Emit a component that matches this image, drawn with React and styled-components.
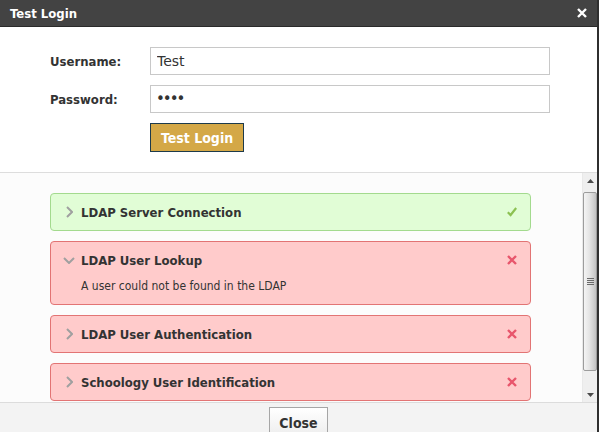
import React from 'react';
import styled, { createGlobalStyle } from 'styled-components';

const GlobalStyle = createGlobalStyle`
  html, body {
    margin: 0;
    padding: 0;
    background: #ffffff;
  }
  body {
    font-family: "DejaVu Sans Condensed", "DejaVu Sans", sans-serif;
    color: #333333;
  }
`;

const Dialog = styled.div`
  width: 599px;
  height: 432px;
  box-sizing: border-box;
  border-right: 2px solid #2f2f2f;
  display: flex;
  flex-direction: column;
  overflow: hidden;
  background: #ffffff;
`;

const TitleBar = styled.div`
  height: 26px;
  flex: none;
  background: #434343;
  border-bottom: 1px solid #2a2a2a;
  display: flex;
  align-items: center;
  justify-content: space-between;
  padding: 0 10px 0 10px;
  color: #ffffff;
`;

const TitleText = styled.span`
  font-size: 13px;
  font-weight: bold;
`;

const CloseX = styled.button`
  border: none;
  background: none;
  padding: 0;
  width: 10px;
  height: 10px;
  display: flex;
  cursor: pointer;
`;

const FormSection = styled.div`
  flex: none;
  padding: 20px 0 20px 50px;
  border-bottom: 1px solid #dddddd;
  display: grid;
  grid-template-columns: 100px 400px;
  row-gap: 10px;
  align-items: center;
`;

const Label = styled.label`
  font-size: 13px;
  font-weight: bold;
  color: #333333;
`;

const TextInput = styled.input`
  box-sizing: border-box;
  height: 28px;
  width: 400px;
  border: 1px solid #c8c8c8;
  padding: 0 6px;
  font-family: "DejaVu Sans", sans-serif;
  font-size: 14px;
  color: #333333;
  outline: none;
  background: #ffffff;

  &[type='password'] {
    font-size: 15px;
    letter-spacing: -2px;
    padding-left: 5px;
  }
`;

const PrimaryButton = styled.button`
  grid-column: 2;
  justify-self: start;
  box-sizing: border-box;
  height: 29px;
  padding: 0 10px;
  background: #d4a847;
  border: 1px solid #1d3a4b;
  color: #ffffff;
  font-family: inherit;
  font-size: 14px;
  font-weight: bold;
  cursor: pointer;
`;

const Results = styled.div`
  flex: 1;
  min-height: 0;
  display: flex;
  background: #fcfcfc;
`;

const List = styled.div`
  flex: 1;
  min-width: 0;
  overflow: hidden;
  padding: 20px 51px 0 50px;
  display: flex;
  flex-direction: column;
  gap: 10px;
`;

const ScrollBar = styled.div`
  flex: none;
  width: 15px;
  display: flex;
  flex-direction: column;
  background: #efefef;
  border-left: 1px solid #e9e9e9;
  box-sizing: border-box;
`;

const ArrowButton = styled.div`
  flex: none;
  height: 15px;
  display: flex;
  align-items: center;
  justify-content: center;
`;

const Track = styled.div`
  flex: 1;
  display: flex;
  flex-direction: column;
  padding: 4px 0 16px 0;
`;

const Thumb = styled.div`
  flex: 1;
  box-sizing: border-box;
  border: 1px solid #9c9c9c;
  border-radius: 2px;
  background: linear-gradient(to right, #f4f4f4, #e4e4e4 45%, #d0d0d0 80%, #c2c2c2);
  display: flex;
  align-items: center;
  justify-content: center;
`;

const Card = styled.div`
  flex: none;
  border: 1px solid ${p => (p.ok ? '#a3da8e' : '#e27474')};
  background: ${p => (p.ok ? '#e1fdd6' : '#ffcbcb')};
  border-radius: 4px;
  padding: 11px 13px 11px 12px;
`;

const CardHead = styled.div`
  display: flex;
  align-items: center;
  height: 14px;
`;

const Chevron = styled.span`
  width: 12px;
  display: flex;
  justify-content: center;
  margin-right: 6px;
`;

const CardTitle = styled.span`
  flex: 1;
  font-size: 13px;
  font-weight: bold;
  color: #333333;
`;

const StatusIcon = styled.span`
  display: flex;
  width: 10px;
  height: 10px;
`;

const Detail = styled.div`
  margin: 12px 0 0 18px;
  font-size: 12px;
  line-height: 14px;
  color: #333333;
`;

const Footer = styled.div`
  flex: none;
  height: 30px;
  box-sizing: border-box;
  overflow: hidden;
  background: #f3f3f3;
  border-top: 1px solid #dcdcdc;
  display: flex;
  justify-content: center;
  align-items: flex-start;
  padding-top: 4px;
`;

const GhostButton = styled.button`
  flex: none;
  box-sizing: border-box;
  height: 32px;
  padding: 0 9px;
  border: 1px solid #a6a6a6;
  background: linear-gradient(#ffffff, #ececec);
  font-family: inherit;
  font-size: 14px;
  font-weight: bold;
  color: #333333;
  cursor: pointer;
`;

const ChevronIcon = ({ open }) => (
  <svg width={open ? 12 : 7} height={open ? 7 : 12} viewBox={open ? '0 0 12 7' : '0 0 7 12'}>
    {open ? (
      <path d="M1 1 L6 6 L11 1" fill="none" stroke="#a0a0a0" strokeWidth="2" />
    ) : (
      <path d="M1 1 L6 6 L1 11" fill="none" stroke="#a0a0a0" strokeWidth="2" />
    )}
  </svg>
);

const CheckIcon = () => (
  <svg width="10" height="10" viewBox="0 0 10 10">
    <path d="M0.8 5.2 L3.6 8 L9.2 1" fill="none" stroke="#8cc152" strokeWidth="2.2" />
  </svg>
);

const CrossIcon = ({ color = '#e8566c' }) => (
  <svg width="10" height="10" viewBox="0 0 10 10">
    <path d="M1 1 L9 9 M9 1 L1 9" fill="none" stroke={color} strokeWidth="2.4" />
  </svg>
);

const Triangle = ({ up }) => (
  <svg width="7" height="4" viewBox="0 0 7 4">
    <path d={up ? 'M0 4 L3.5 0 L7 4 Z' : 'M0 0 L7 0 L3.5 4 Z'} fill="#4a4a4a" />
  </svg>
);

const Grip = () => (
  <svg width="7" height="7" viewBox="0 0 7 7">
    <path d="M0 0.5 H7 M0 2.5 H7 M0 4.5 H7 M0 6.5 H7" stroke="#6a6a6a" strokeWidth="1" />
  </svg>
);

const checks = [
  { name: 'LDAP Server Connection', ok: true },
  { name: 'LDAP User Lookup', ok: false, open: true, detail: 'A user could not be found in the LDAP' },
  { name: 'LDAP User Authentication', ok: false },
  { name: 'Schoology User Identification', ok: false },
];

const App = () => {
  return (
    <>
      <GlobalStyle />
      <Dialog>
        <TitleBar>
          <TitleText>Test Login</TitleText>
          <CloseX aria-label="Close">
            <CrossIcon color="#ffffff" />
          </CloseX>
        </TitleBar>

        <FormSection>
          <Label htmlFor="username">Username:</Label>
          <TextInput id="username" defaultValue="Test" />
          <Label htmlFor="password">Password:</Label>
          <TextInput id="password" type="password" defaultValue="test" />
          <PrimaryButton>Test Login</PrimaryButton>
        </FormSection>

        <Results>
          <List>
            {checks.map(c => (
              <Card key={c.name} ok={c.ok}>
                <CardHead>
                  <Chevron><ChevronIcon open={c.open} /></Chevron>
                  <CardTitle>{c.name}</CardTitle>
                  <StatusIcon>{c.ok ? <CheckIcon /> : <CrossIcon />}</StatusIcon>
                </CardHead>
                {c.open && <Detail>{c.detail}</Detail>}
              </Card>
            ))}
          </List>
          <ScrollBar>
            <ArrowButton><Triangle up /></ArrowButton>
            <Track>
              <Thumb><Grip /></Thumb>
            </Track>
            <ArrowButton><Triangle /></ArrowButton>
          </ScrollBar>
        </Results>

        <Footer>
          <GhostButton>Close</GhostButton>
        </Footer>
      </Dialog>
    </>
  );
};

export default App;
